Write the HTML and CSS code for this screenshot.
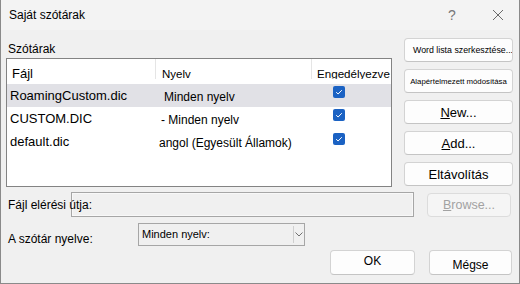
FILE: index.html
```html
<!DOCTYPE html>
<html lang="hu">

<head>
    <meta charset="UTF-8">
    <title>Saját szótárak</title>
    <link rel="stylesheet" href="styles.css">
</head>

<body>
    <div class="dialog">
        <div class="titlebar">
            <span class="title">Saját szótárak</span>
            <span class="help">?</span>
            <span class="close">
                <svg width="12" height="12" viewBox="0 0 12 12">
                    <path d="M1 1 L11 11 M11 1 L1 11" stroke="#6a6a6a" stroke-width="1" fill="none" />
                </svg>
            </span>
        </div>

        <div class="main">
            <div class="left-col">
                <div class="group-label">Szótárak</div>
                <div class="listbox">
                    <div class="list-head">
                        <div class="head-cell c1">Fájl</div>
                        <div class="head-cell c2">Nyelv</div>
                        <div class="head-cell c3">Engedélyezve</div>
                    </div>
                    <div class="list-row selected">
                        <div class="cell c1">RoamingCustom.dic</div>
                        <div class="cell c2 lang-a">Minden nyelv</div>
                        <div class="cell c3"><span class="check"><svg width="12" height="12" viewBox="0 0 12 12"><path d="M3.2 6.2 L5.1 8 L8.8 4.2" stroke="#fff" stroke-width="1" fill="none" /></svg></span></div>
                    </div>
                    <div class="list-row">
                        <div class="cell c1">CUSTOM.DIC</div>
                        <div class="cell c2 lang-b">- Minden nyelv</div>
                        <div class="cell c3"><span class="check"><svg width="12" height="12" viewBox="0 0 12 12"><path d="M3.2 6.2 L5.1 8 L8.8 4.2" stroke="#fff" stroke-width="1" fill="none" /></svg></span></div>
                    </div>
                    <div class="list-row">
                        <div class="cell c1">default.dic</div>
                        <div class="cell c2 lang-c">angol (Egyesült Államok)</div>
                        <div class="cell c3"><span class="check low"><svg width="12" height="12" viewBox="0 0 12 12"><path d="M3.2 6.2 L5.1 8 L8.8 4.2" stroke="#fff" stroke-width="1" fill="none" /></svg></span></div>
                    </div>
                </div>
            </div>
            <div class="side-buttons">
                <button class="btn btn-left">Word lista szerkesztése...</button>
                <button class="btn btn-tiny">Alapértelmezett módosítása</button>
                <button class="btn btn-big"><u>N</u>ew...</button>
                <button class="btn btn-big"><u>A</u>dd...</button>
                <button class="btn btn-big">Eltávolítás</button>
            </div>
        </div>

        <div class="path-row">
            <span class="field-label path-label">Fájl elérési útja:</span>
            <div class="path-input"></div>
            <button class="btn btn-browse" disabled><u>B</u>rowse...</button>
        </div>

        <div class="lang-row">
            <span class="field-label lang-label">A szótár nyelve:</span>
            <div class="select">
                <span class="select-text">Minden nyelv:</span>
                <span class="select-arrow">
                    <svg width="8" height="5" viewBox="0 0 8 5">
                        <path d="M0.5 0.5 L4 4 L7.5 0.5" stroke="#707070" stroke-width="1" fill="none" />
                    </svg>
                </span>
            </div>
        </div>

        <div class="action-row">
            <button class="btn btn-ok">OK</button>
            <button class="btn btn-cancel">Mégse</button>
        </div>
    </div>
</body>

</html>
```

FILE: styles.css
```css
body {
    margin: 0;
    font-family: 'Liberation Sans', Arial, sans-serif;
    color: #000;
    background: #f0f0f0;
}

.dialog {
    width: 520px;
    height: 284px;
    box-sizing: border-box;
    border: 1px solid #8a8a8a;
    border-top: none;
    background: #f0f0f0;
    overflow: hidden;
}

.titlebar {
    display: flex;
    align-items: center;
    height: 30px;
    background: #f3f3f3;
    padding-left: 8px;
}

.title {
    font-size: 12px;
    flex: 1;
}

.help {
    font-size: 14px;
    color: #777;
    width: 12px;
    text-align: center;
    margin-right: 34px;
}

.close {
    display: flex;
    margin-right: 15px;
}

.main {
    display: flex;
    gap: 12px;
    padding: 8px 0 0 5px;
}

.left-col {
    width: 386px;
}

.group-label {
    font-size: 12px;
    line-height: 14px;
    margin: 4px 0 2px 2px;
}

.listbox {
    height: 129px;
    box-sizing: border-box;
    border: 1px solid #838383;
    background: #fff;
    overflow: hidden;
}

.list-head,
.list-row {
    display: grid;
    grid-template-columns: 149px 156px 1fr;
}

.list-head {
    height: 25px;
    align-items: start;
}

.head-cell {
    height: 20px;
    box-sizing: border-box;
    padding-top: 8px;
    line-height: 14px;
    font-size: 13px;
    white-space: nowrap;
    overflow: visible;
}

.head-cell.c1 {
    padding-left: 5px;
    border-right: 1px solid #e5e5e5;
}

.head-cell.c2 {
    padding-left: 6px;
    font-size: 11.5px;
    border-right: 1px solid #e5e5e5;
}

.head-cell.c3 {
    padding-left: 5px;
    font-size: 11.6px;
    overflow: hidden;
}

.list-row {
    height: 23px;
}

.list-row.selected {
    background: #e1e1e6;
}

.cell {
    line-height: 23px;
    white-space: nowrap;
}

.cell.c1 {
    font-size: 13px;
    padding-left: 3px;
}

.cell.c2 {
    font-size: 12px;
    padding-top: 2px;
    line-height: 22px;
}

.lang-a {
    padding-left: 8px;
}

.lang-b {
    padding-left: 5px;
}

.lang-c {
    padding-left: 3px;
}

.check {
    display: flex;
    width: 12px;
    height: 12px;
    margin: 2px 0 0 21px;
    background: #1b62c3;
    border-radius: 2px;
}

.check.low {
    margin-top: 3px;
}

.side-buttons {
    display: flex;
    flex-direction: column;
    gap: 7px;
    width: 109px;
}

.btn {
    height: 24px;
    box-sizing: border-box;
    background: #fdfdfd;
    border: 1px solid #d3d3d3;
    border-bottom-color: #c4c4c4;
    border-radius: 4px;
    font-family: 'Liberation Sans', Arial, sans-serif;
    color: #000;
    padding: 0;
    white-space: nowrap;
    overflow: hidden;
}

.btn-left {
    text-align: left;
    padding-left: 8px;
    font-size: 8.8px;
}

.btn-tiny {
    font-size: 7.8px;
}

.btn-big {
    font-size: 13px;
}

.path-row {
    display: flex;
    align-items: flex-start;
    margin-top: 5px;
    padding-left: 7px;
}

.field-label {
    font-size: 12px;
    white-space: nowrap;
}

.path-label {
    width: 63px;
    line-height: 14px;
    margin-top: 6px;
    position: relative;
    z-index: 1;
}

.path-input {
    width: 343px;
    height: 25px;
    box-sizing: border-box;
    border: 1px solid #a6a6a6;
    box-shadow: inset 0 0 0 1px #f8f8f8;
    background: #f0f0f0;
}

.btn-browse {
    width: 84px;
    margin: 1px 0 0 13px;
    font-size: 12.5px;
    color: #a2a2a2;
    background: #f5f5f5;
    border-color: #dcdcdc;
}

.lang-row {
    display: flex;
    align-items: flex-start;
    margin-top: 6px;
    padding-left: 7px;
}

.lang-label {
    width: 130px;
    line-height: 14px;
    margin-top: 9px;
}

.select {
    display: flex;
    align-items: center;
    width: 167px;
    height: 23px;
    box-sizing: border-box;
    border: 1px solid #a6a6a6;
    background: #f0f0f0;
}

.select-text {
    flex: 1;
    font-size: 11px;
    padding-left: 3px;
    margin-top: -2px;
}

.select-arrow {
    display: flex;
    align-items: center;
    justify-content: center;
    width: 8px;
    height: 17px;
    border-left: 1px solid #cfcfcf;
    padding: 0 1px 0 1px;
}

.action-row {
    display: flex;
    justify-content: flex-end;
    gap: 14px;
    margin-top: 4px;
    padding-right: 7px;
}

.btn-ok {
    width: 85px;
    height: 25px;
    font-size: 12px;
    padding-bottom: 3px;
}

.btn-cancel {
    width: 83px;
    height: 25px;
    font-size: 12px;
    padding-top: 4px;
}
```
